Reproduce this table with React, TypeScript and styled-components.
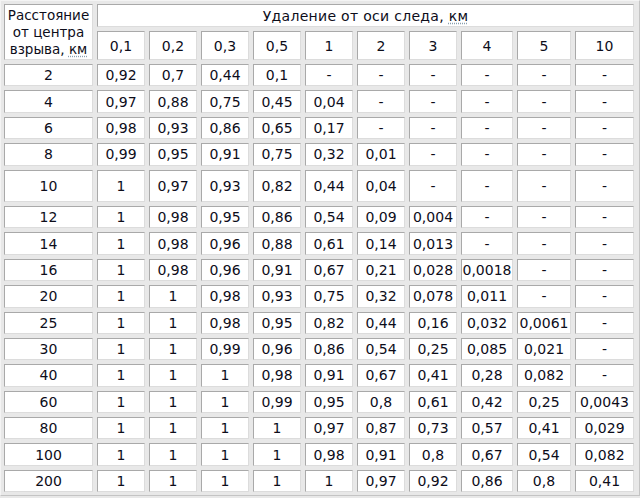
import React from "react";
import styled, { createGlobalStyle } from "styled-components";

const Global = createGlobalStyle`
  html, body { margin: 0; padding: 0; background: #e8e8e8; }
  body { font-family: "DejaVu Sans", Verdana, sans-serif; }
`;

const Grid = styled.div`
  box-sizing: border-box;
  width: 640px;
  display: grid;
  grid-template-columns: 89px repeat(7, 48px) 52px 54px 59px;
  gap: 4px;
  padding: 3px;
  background: #e8e8e8;
  border: 1px solid;
  border-color: #f4f4f4 #c4c4c4 #c4c4c4 #f4f4f4;
  font-family: "DejaVu Sans", Verdana, sans-serif;
  font-size: 14px;
  color: #0d0d1a;
`;

const Cell = styled.div`
  box-sizing: border-box;
  background: #ffffff;
  border: 1px solid;
  border-color: #a9a9a9 #dcdcdc #dcdcdc #a9a9a9;
  display: flex;
  align-items: center;
  justify-content: center;
  text-align: center;
  white-space: nowrap;
  line-height: 16px;
`;

const CornerHead = styled(Cell)`
  grid-row: 1 / span 2;
  grid-column: 1;
  white-space: normal;
  font-size: 13.5px;
  line-height: 17px;
  padding: 0 2px;
`;

const TopHead = styled(Cell)`
  grid-row: 1;
  grid-column: 2 / span 10;
  letter-spacing: 0.3px;
`;

const Unit = styled.abbr`
  text-decoration-line: underline;
  text-decoration-style: dotted;
  text-decoration-color: #8aa0b0;
  text-underline-offset: 2px;
`;

const RowWrap = styled.div`
  display: contents;
`;

const cols = ["0,1", "0,2", "0,3", "0,5", "1", "2", "3", "4", "5", "10"];

const rows: [string, string[]][] = [
  ["2", ["0,92", "0,7", "0,44", "0,1", "-", "-", "-", "-", "-", "-"]],
  ["4", ["0,97", "0,88", "0,75", "0,45", "0,04", "-", "-", "-", "-", "-"]],
  ["6", ["0,98", "0,93", "0,86", "0,65", "0,17", "-", "-", "-", "-", "-"]],
  ["8", ["0,99", "0,95", "0,91", "0,75", "0,32", "0,01", "-", "-", "-", "-"]],
  ["10", ["1", "0,97", "0,93", "0,82", "0,44", "0,04", "-", "-", "-", "-"]],
  ["12", ["1", "0,98", "0,95", "0,86", "0,54", "0,09", "0,004", "-", "-", "-"]],
  ["14", ["1", "0,98", "0,96", "0,88", "0,61", "0,14", "0,013", "-", "-", "-"]],
  ["16", ["1", "0,98", "0,96", "0,91", "0,67", "0,21", "0,028", "0,0018", "-", "-"]],
  ["20", ["1", "1", "0,98", "0,93", "0,75", "0,32", "0,078", "0,011", "-", "-"]],
  ["25", ["1", "1", "0,98", "0,95", "0,82", "0,44", "0,16", "0,032", "0,0061", "-"]],
  ["30", ["1", "1", "0,99", "0,96", "0,86", "0,54", "0,25", "0,085", "0,021", "-"]],
  ["40", ["1", "1", "1", "0,98", "0,91", "0,67", "0,41", "0,28", "0,082", "-"]],
  ["60", ["1", "1", "1", "0,99", "0,95", "0,8", "0,61", "0,42", "0,25", "0,0043"]],
  ["80", ["1", "1", "1", "1", "0,97", "0,87", "0,73", "0,57", "0,41", "0,029"]],
  ["100", ["1", "1", "1", "1", "0,98", "0,91", "0,8", "0,67", "0,54", "0,082"]],
  ["200", ["1", "1", "1", "1", "1", "0,97", "0,92", "0,86", "0,8", "0,41"]],
];

export default function App() {
  return (
    <>
      <Global />
      <Grid
        style={{
          gridTemplateRows: `23px 29px ${rows
            .map(([k]) => (k === "10" ? "32.4px" : "22.4px"))
            .join(" ")}`,
        }}
      >
        <CornerHead>
          <span>
            Расстояние от центра взрыва, <Unit title="километр">км</Unit>
          </span>
        </CornerHead>
        <TopHead>
          <span>
            Удаление от оси следа, <Unit title="километр">км</Unit>
          </span>
        </TopHead>
        {cols.map((c) => (
          <Cell key={"h" + c}>{c}</Cell>
        ))}
        {rows.map(([k, vals]) => (
          <RowWrap key={k}>
            <Cell>{k}</Cell>
            {vals.map((v, i) => (
              <Cell key={i}>{v}</Cell>
            ))}
          </RowWrap>
        ))}
      </Grid>
    </>
  );
}
